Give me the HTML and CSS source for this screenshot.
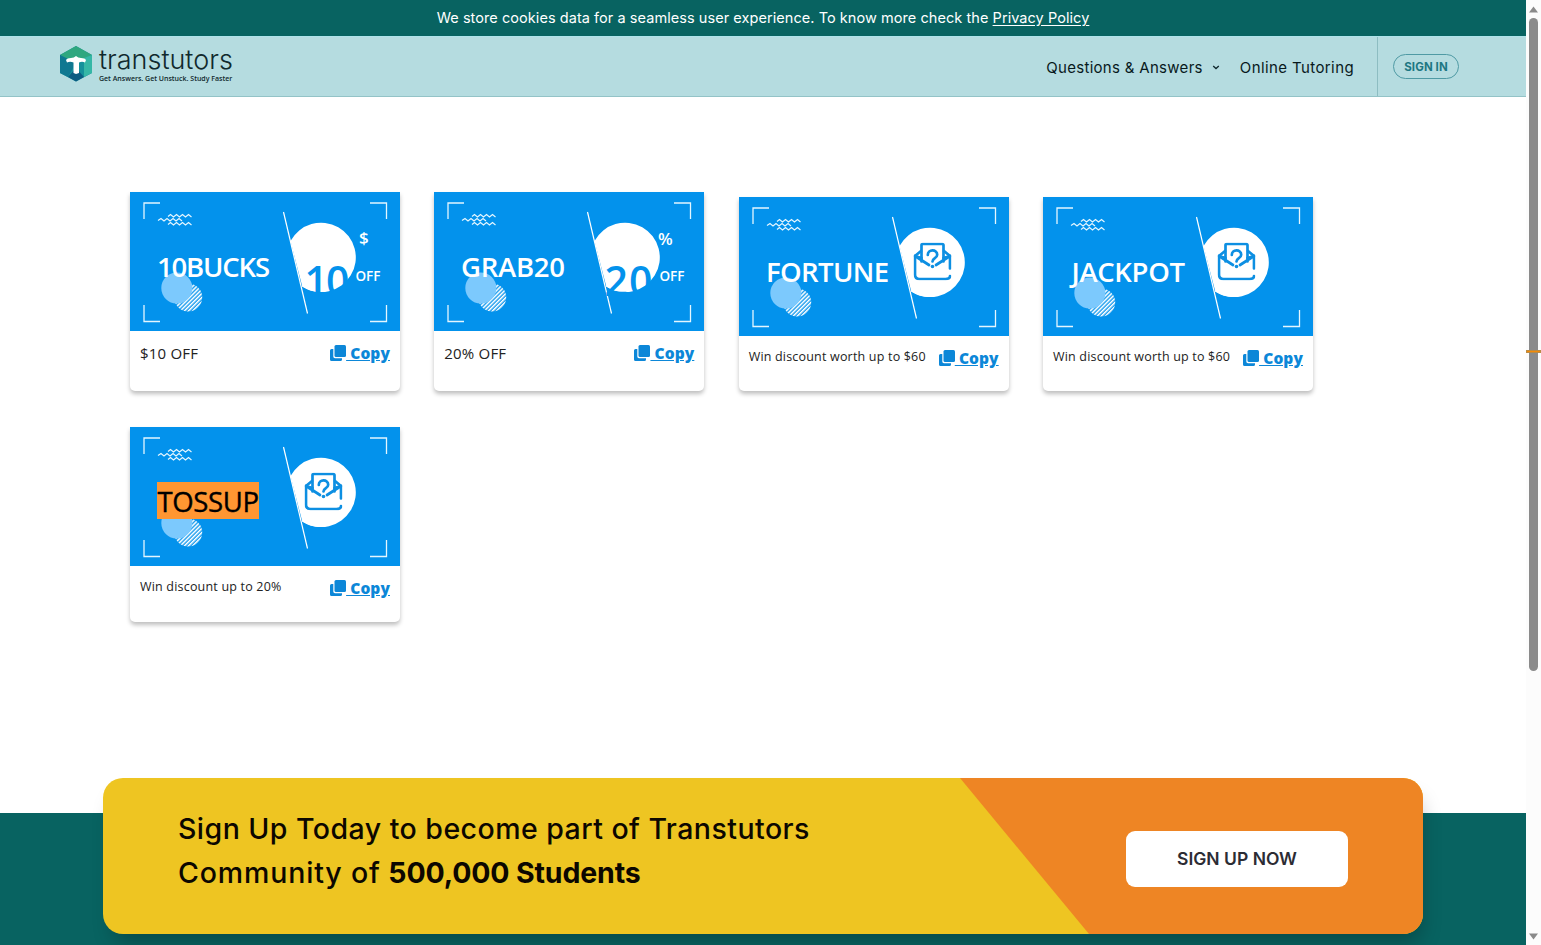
FILE: index.html
```html
<!DOCTYPE html>
<html lang="en">
  <head>
    <meta charset="utf-8">
    <meta name="viewport" content="width=device-width">
    <title>Transtutors Coupons</title>
    <link rel="stylesheet" href="styles.css">
  </head>
  <body>

    <!-- shared coupon artwork -->
    <svg class="defs" width="0" height="0">
      <defs>
        <pattern id="stripes" width="2.9" height="2.9" patternUnits="userSpaceOnUse" patternTransform="rotate(-45)">
          <rect width="2.9" height="1.6" fill="#fff"/>
        </pattern>
        <symbol id="coupon" viewBox="0 0 270 139">
          <g fill="none" stroke="#e4f6ff" stroke-width="1.3">
            <path d="M14 27V11H30M240 11h16.500v16M14 113v16.500h16M240 129.500h16.500V113"/>
            <path stroke-width="1.200" d="M38 24.500l2.500-2 3 2.500 3-2.500 3 2.500 3-2.500 3 2.500 3-2.500 3 2.500M28 28.500l3-2 3 2.500 3-2.500 3 2.500 3-2.500 3 2.500 3-2.500 3 2.500M38 32.500l2.500-2 3 2.500 3-2.500 3 2.500 3-2.500 3 2.500 3-2.500 3 2.500"/>
          </g>
          <circle cx="58.200" cy="105.500" r="14" fill="url(#stripes)"/>
          <circle cx="46.800" cy="96" r="15.500" fill="#7cc9fd"/>
          <path d="M160.500 49A34.700 34.700 0 1 1 172.300 94.500Z" fill="#fff"/>
          <path d="M172 94.500A34.700 34.700 0 0 0 191 100V60Z" fill="#fff"/>
          <path d="M153.500 20L177.500 121.500" stroke="#fff" stroke-width="1.200"/>
        </symbol>
        <symbol id="letter" viewBox="0 0 38 38">
          <g fill="none" stroke="#0d8fe2" stroke-width="2.700" stroke-linecap="round" stroke-linejoin="round">
            <path d="M8 19V2.700Q8 1.500 9.300 1.500H28.700Q30 1.500 30 2.700V19"/>
            <path d="M7.500 8.500L1.500 13.500V32Q1.500 36.500 6 36.500H32Q36.500 36.500 36.500 33.500M36.500 26V13.500L30.500 8.500"/>
            <path d="M1.500 13.500L15.500 22.500M36.500 13.500L22.500 22.500M1.500 13.500L8 15.500M36.500 13.500L30 15.500"/>
            <path d="M14.300 12.500C14.300 6.500 23.700 6.500 23.700 12.200C23.700 15.800 19 15.500 19 19"/>
          </g>
          <circle cx="19" cy="24" r="1.800" fill="#0d8fe2"/>
        </symbol>
        <symbol id="copy" viewBox="0 0 16 16">
          <rect x="4.500" y="0" width="11.500" height="12" rx="1.500"/>
          <path d="M1.500 4H3.300V11.500Q3.300 13.200 5 13.200H12V14.500Q12 16 10.500 16H1.500Q0 16 0 14.500V5.500Q0 4 1.500 4Z"/>
        </symbol>
      </defs>
    </svg>

    <div class="page">

      <div class="cookie">
        <span>We store cookies data for a seamless user experience. To know more check the <a href="#">Privacy Policy</a></span>
      </div>

      <header class="header">
        <a class="logo" href="#">
          <svg width="32" height="36" viewBox="0 0 32 36">
            <path d="M16 0L32 9V27L16 35.500L0 27V9Z" fill="#15919b"/>
            <path d="M16 0L32 9L16 17L0 9Z" fill="#2fa77f"/>
            <path d="M0 9L16 17L8 31L0 27Z" fill="#0f7891"/>
            <path d="M32 9V27L24 31V12Z" fill="#35b7a6"/>
            <path d="M8 31L16 22L24 31L16 35.500Z" fill="#0c5c82"/>
            <path d="M6 14Q7 12 11 12Q14 12 16 10Q18 12 21 12Q25 12 26 14L25 16.500Q22 15 19 16.500V27L16 28L13.500 27V16.500Q10 15 7 16.500Z" fill="#fff"/>
          </svg>
          <span class="logo-text">
            <span class="logo-name">transtutors</span>
            <span class="logo-tag">Get Answers. Get Unstuck. Study Faster</span>
          </span>
        </a>
        <nav class="nav">
          <a class="nav-qa" href="#">Questions &amp; Answers</a>
          <svg class="caret" width="8" height="5" viewBox="0 0 8 5"><path d="M1.200 1l2.800 2.600L6.800 1" fill="none" stroke="#10292d" stroke-width="1.300"/></svg>
          <a class="nav-tutor" href="#">Online Tutoring</a>
        </nav>
        <div class="sign">
          <a class="sign-in" href="#">SIGN IN</a>
        </div>
      </header>

      <main class="coupons">

        <div class="card tall">
          <svg class="art" viewBox="0 0 270 139">
            <use href="#coupon"/>
            <text class="code" x="27" y="84.500" textLength="113">10BUCKS</text>
            <text class="amount" x="174.500" y="104" textLength="45">10</text>
            <text class="unit" x="229" y="52">$</text>
            <text class="off" x="225.500" y="89" textLength="25">OFF</text>
          </svg>
          <div class="info">
            <span class="deal">$10 OFF</span>
            <a class="copy" href="#"><svg width="16" height="16"><use href="#copy"/></svg><span>&nbsp;Copy</span></a>
          </div>
        </div>

        <div class="card tall">
          <svg class="art" viewBox="0 0 270 139">
            <use href="#coupon"/>
            <text class="code" x="27" y="84.500" textLength="104">GRAB20</text>
            <text class="amount" x="170.500" y="104" textLength="48">20</text>
            <text class="unit" x="224" y="53">%</text>
            <text class="off" x="225.500" y="89" textLength="25">OFF</text>
          </svg>
          <div class="info">
            <span class="deal">20% OFF</span>
            <a class="copy" href="#"><svg width="16" height="16"><use href="#copy"/></svg><span>&nbsp;Copy</span></a>
          </div>
        </div>

        <div class="card">
          <svg class="art" viewBox="0 0 270 139">
            <use href="#coupon"/>
            <text class="code" x="27" y="84.500" textLength="123">FORTUNE</text>
            <use href="#letter" x="174.500" y="45.500" width="38" height="38"/>
          </svg>
          <div class="info">
            <span class="deal">Win discount worth up to $60</span>
            <a class="copy" href="#"><svg width="16" height="16"><use href="#copy"/></svg><span>&nbsp;Copy</span></a>
          </div>
        </div>

        <div class="card">
          <svg class="art" viewBox="0 0 270 139">
            <use href="#coupon"/>
            <text class="code" x="28.500" y="84.500" textLength="113.500">JACKPOT</text>
            <use href="#letter" x="174.500" y="45.500" width="38" height="38"/>
          </svg>
          <div class="info">
            <span class="deal">Win discount worth up to $60</span>
            <a class="copy" href="#"><svg width="16" height="16"><use href="#copy"/></svg><span>&nbsp;Copy</span></a>
          </div>
        </div>

        <div class="card last">
          <svg class="art" viewBox="0 0 270 139">
            <use href="#coupon"/>
            <rect x="27" y="55" width="102" height="37" fill="#ff9632"/>
            <text class="code found" x="27.500" y="84.500" textLength="101.500">TOSSUP</text>
            <use href="#letter" x="174.500" y="45.500" width="38" height="38"/>
          </svg>
          <div class="info">
            <span class="deal">Win discount up to 20%</span>
            <a class="copy" href="#"><svg width="16" height="16"><use href="#copy"/></svg><span>&nbsp;Copy</span></a>
          </div>
        </div>

      </main>

      <footer class="footer">
        <div class="banner">
          <p class="banner-text">
            <span class="line1">Sign Up Today to become part of Transtutors</span><br>
            <span class="line2">Community of</span> <b>500,000 Students</b>
          </p>
          <div class="banner-side">
            <a class="sign-up" href="#">SIGN UP NOW</a>
          </div>
        </div>
      </footer>

    </div>

    <div class="scrollbar">
      <svg width="9" height="7" viewBox="0 0 9 7"><path d="M4.500 0.500L9 6.500H0Z" fill="#8a8a8a"/></svg>
      <div class="thumb"></div>
      <svg class="down" width="9" height="7" viewBox="0 0 9 7"><path d="M0 0.500H9L4.500 6.500Z" fill="#8a8a8a"/></svg>
      <div class="mark"></div>
    </div>

  </body>
</html>
```
FILE: styles.css
```css
* {
  box-sizing: border-box;
}

body {
  margin: 0;
  height: 945px;
  display: flex;
  overflow: hidden;
  background-color: #fff;
  font-family: Inter, sans-serif;
}

a {
  color: inherit;
  text-decoration: none;
}

.defs {
  position: absolute;
}

.page {
  width: 1526px;
  display: flex;
  flex-direction: column;
}

/* top bar */
.cookie {
  height: 36px;
  display: flex;
  justify-content: center;
  align-items: center;
  padding-bottom: 2px;
  background-color: #086361;
  color: #fff;
  font-size: 14.500px;
  letter-spacing: 0.060px;
}

.cookie a {
  text-decoration: underline;
  text-underline-offset: 2px;
}

.header {
  height: 61px;
  display: flex;
  align-items: center;
  padding-left: 60px;
  background-color: #b5dce0;
  border-top: 1px solid #aee3ea;
  border-bottom: 1px solid #93c3c7;
}

.logo {
  display: flex;
  gap: 6px;
  margin-top: -4px;
}

.logo-text {
  display: flex;
  flex-direction: column;
  color: #10292d;
}

.logo-name {
  font-size: 27px;
  font-weight: 300;
  line-height: 24px;
  letter-spacing: 0;
  padding: 2px 0 2px 1px;
}

.logo-tag {
  font-family: "Open Sans", sans-serif;
  font-size: 7px;
  font-weight: 600;
  line-height: 9px;
  padding-left: 1px;
}

.nav {
  display: flex;
  align-items: center;
  margin-left: auto;
  padding: 2px 23px 0 0;
  color: #08191c;
  font-size: 15px;
}

.nav-qa {
  letter-spacing: 0.3px;
}

.nav-tutor {
  letter-spacing: 0.4px;
}

.caret {
  margin: 0 20px 0 9px;
}

.sign {
  width: 149px;
  height: 100%;
  display: flex;
  align-items: center;
  padding-left: 15px;
  border-left: 1px solid #8dbdc2;
}

.sign-in {
  width: 66px;
  height: 25px;
  border: 1px solid #4f9aa4;
  border-radius: 13px;
  color: #1d7783;
  font-size: 11.500px;
  font-weight: 700;
  line-height: 24px;
  text-align: center;
  letter-spacing: 0.1px;
}

/* coupons */
.coupons {
  display: grid;
  grid-template-columns: repeat(4, 270px);
  column-gap: 34.330px;
  row-gap: 36px;
  align-items: end;
  align-content: start;
  height: 716px;
  padding: 95px 0 0 130px;
  font-family: "Open Sans", sans-serif;
}

.card {
  height: 194px;
  border-radius: 0 0 5px 5px;
  box-shadow: 0 3px 4px rgba(0, 0, 0, 0.25);
}

.card.tall {
  height: 199px;
}

.card.last {
  height: 195px;
}

.art {
  display: block;
  width: 270px;
  height: 139px;
  background-color: #0392ec;
}

.art text {
  fill: #fff;
  font-weight: 600;
}

.art .code {
  font-size: 27.500px;
}

.art .found {
  fill: #000;
  font-weight: 500;
  stroke: #000;
  stroke-width: 0.4px;
}

.art .amount {
  fill: #0392ec;
  font-size: 41px;
}

.art .unit {
  font-size: 17px;
}

.art .off {
  font-size: 13.500px;
}

.info {
  display: flex;
  justify-content: space-between;
  padding: 12px 10px 0;
  color: #222;
}

.deal {
  font-size: 12.500px;
  font-weight: 500;
  line-height: 17px;
  letter-spacing: 0.190px;
}

.tall .deal {
  font-size: 15px;
  line-height: 20px;
}

.copy {
  display: flex;
  color: #0c87d8;
  fill: #0c87d8;
  font-size: 15.500px;
  font-weight: 800;
  line-height: 20px;
  letter-spacing: 0.1px;
}

.copy svg {
  margin-top: 2px;
}

.copy span {
  text-decoration: underline;
}

/* sign up banner */
.footer {
  height: 132px;
  background-color: #086361;
}

.banner {
  width: 1320px;
  height: 156px;
  display: flex;
  justify-content: space-between;
  margin: -35px 0 0 103px;
  overflow: hidden;
  border-radius: 20px;
  background-color: #eec522;
  box-shadow: 4px 14px 20px -6px rgba(0, 0, 0, 0.25);
}

.banner-text {
  margin: 0;
  padding: 29px 0 0 75px;
  color: #0c0700;
  font-size: 28.500px;
  font-weight: 500;
  line-height: 44px;
  white-space: nowrap;
}

.line1 {
  letter-spacing: 0.460px;
}

.line2 {
  letter-spacing: 0.850px;
}

.banner-text b {
  font-weight: 700;
  letter-spacing: -0.150px;
}

.banner-side {
  width: 463px;
  padding: 53px 0 0 166px;
  background-color: #ee8524;
  clip-path: polygon(0 0, 100% 0, 100% 100%, 129px 100%);
}

.sign-up {
  display: block;
  width: 222px;
  height: 56px;
  border-radius: 9px;
  background-color: #fff;
  color: #2c2c34;
  font-size: 17.500px;
  font-weight: 600;
  line-height: 56px;
  text-align: center;
}

/* window scrollbar */
.scrollbar {
  position: relative;
  width: 15px;
  display: flex;
  flex-direction: column;
  align-items: center;
  padding: 6px 0 5px;
  background-color: #fcfcfc;
}

.thumb {
  width: 9px;
  height: 653px;
  margin-top: 5px;
  border-radius: 5px;
  background-color: #8b8b8b;
}

.down {
  margin-top: auto;
}

.mark {
  position: absolute;
  top: 350px;
  left: 0;
  width: 15px;
  height: 3px;
  border: 1px solid #b98b45;
  background-color: #f58a07;
}
```
